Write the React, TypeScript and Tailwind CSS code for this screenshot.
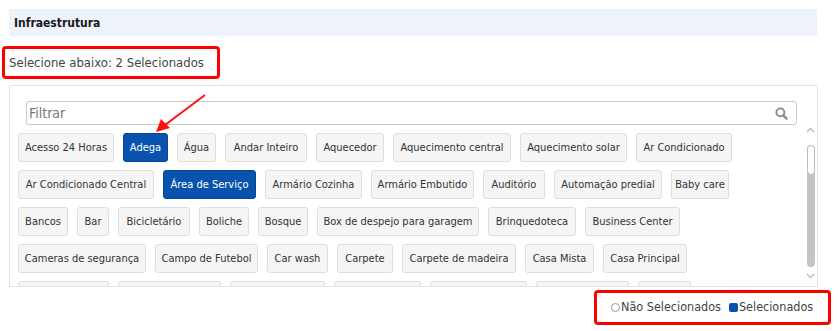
import React from "react";

type Chip = { label: string; w: string; sel?: boolean };

const rows: Chip[][] = [
  [
    { label: "Acesso 24 Horas", w: "w-[96px]" },
    { label: "Adega", w: "w-[45px]", sel: true },
    { label: "Água", w: "w-[39px]" },
    { label: "Andar Inteiro", w: "w-[82px]" },
    { label: "Aquecedor", w: "w-[68px]" },
    { label: "Aquecimento central", w: "w-[118px]" },
    { label: "Aquecimento solar", w: "w-[107px]" },
    { label: "Ar Condicionado", w: "w-[96px]" },
  ],
  [
    { label: "Ar Condicionado Central", w: "w-[136px]" },
    { label: "Área de Serviço", w: "w-[93px]", sel: true },
    { label: "Armário Cozinha", w: "w-[97px]" },
    { label: "Armário Embutido", w: "w-[103px]" },
    { label: "Auditório", w: "w-[62px]" },
    { label: "Automação predial", w: "w-[108px]" },
    { label: "Baby care", w: "w-[58px]" },
  ],
  [
    { label: "Bancos", w: "w-[50px]" },
    { label: "Bar", w: "w-[32px]" },
    { label: "Bicicletário", w: "w-[72px]" },
    { label: "Boliche", w: "w-[50px]" },
    { label: "Bosque", w: "w-[50px]" },
    { label: "Box de despejo para garagem", w: "w-[162px]" },
    { label: "Brinquedoteca", w: "w-[88px]" },
    { label: "Business Center", w: "w-[95px]" },
  ],
  [
    { label: "Cameras de segurança", w: "w-[128px]" },
    { label: "Campo de Futebol", w: "w-[103px]" },
    { label: "Car wash", w: "w-[61px]" },
    { label: "Carpete", w: "w-[56px]" },
    { label: "Carpete de madeira", w: "w-[114px]" },
    { label: "Casa Mista", w: "w-[69px]" },
    { label: "Casa Principal", w: "w-[84px]" },
  ],
  [
    { label: "Cerca elétrica", w: "w-[91px]" },
    { label: "Churrasqueira gás", w: "w-[103px]" },
    { label: "Churrasqueira", w: "w-[95px]" },
    { label: "Circuito TV", w: "w-[87px]" },
    { label: "Closet casal", w: "w-[97px]" },
    { label: "Copa cozinha", w: "w-[93px]" },
    { label: "Copa", w: "w-[53px]" },
  ],
];

const font = { fontFamily: '"DejaVu Sans Condensed", "DejaVu Sans", sans-serif' };

function ChipEl({ c }: { c: Chip }) {
  const base =
    "shrink-0 h-[29px] flex items-center justify-center whitespace-nowrap rounded-[3px] border text-[11px] leading-none ";
  return (
    <div
      className={
        base +
        c.w +
        (c.sel
          ? " border-[#0b4592] bg-[#0753ad] text-white"
          : " border-[#dedede] bg-[#f5f5f5] text-[#333]")
      }
    >
      {c.label}
    </div>
  );
}

export default function App() {
  return (
    <div className="relative w-[838px] h-[331px] bg-white overflow-hidden" style={font}>
      <div className="pt-[9px] pl-[9px]">
        <div className="w-[808px] h-[27px] bg-[#eef3fb] flex items-center pl-[5px] text-[12px] font-bold text-[#1a1a1a]">
          Infraestrutura
        </div>
      </div>

      <div className="mt-[10px] ml-[2px] w-[218px] h-[33px] border-[3px] border-[#ff0000] rounded-[4px] flex items-center pl-[4px] text-[13px] text-[#444]">
        Selecione abaixo: 2 Selecionados
      </div>

      <div className="mt-[6px] ml-[9px] w-[809px] h-[202px] border border-[#e4e4e4] flex flex-col overflow-hidden">
        <div className="pt-[15px] pl-[16px] pr-[20px]">
          <div className="h-[24px] border border-[#c8c8c8] rounded-[3px] flex items-center justify-between pl-[2px] pr-[8px]">
            <span className="text-[14px] text-[#777]">Filtrar</span>
            <svg width="13" height="13" viewBox="0 0 14 14">
              <circle cx="5.8" cy="5.8" r="4.3" fill="none" stroke="#888" strokeWidth="2" />
              <line x1="9" y1="9" x2="12.5" y2="12.5" stroke="#888" strokeWidth="2.4" strokeLinecap="round" />
            </svg>
          </div>
        </div>
        <div className="flex flex-1 min-h-0">
          <div className="flex-1 overflow-hidden pt-[8px] pl-[8px] flex flex-col gap-[8px]">
            {rows.map((r, i) => (
              <div key={i} className="flex gap-[9px]">
                {r.map((c) => (
                  <ChipEl key={c.label} c={c} />
                ))}
              </div>
            ))}
          </div>
          <div className="w-[13px] flex flex-col items-center pt-[2px]">
            <svg width="9" height="6" viewBox="0 0 9 6" className="mb-[12px]">
              <polyline points="1,5 4.5,1.5 8,5" fill="none" stroke="#bbb" strokeWidth="1.3" />
            </svg>
            <div className="w-[8px] h-[122px] rounded-[4px] bg-[#c4c4c4] flex flex-col">
              <div className="h-[30px] rounded-[4px] bg-white border border-[#bdbdbd]" />
            </div>
            <svg width="9" height="6" viewBox="0 0 9 6" className="mt-[6px]">
              <polyline points="1,1 4.5,4.5 8,1" fill="none" stroke="#bbb" strokeWidth="1.3" />
            </svg>
          </div>
        </div>
      </div>

      <div className="mt-[3px] flex justify-end pr-[7px]">
        <div className="h-[35px] w-[237px] border-[3px] border-[#ff0000] rounded-[4px] flex items-center pl-[14px] text-[12.5px] text-[#444]">
          <span className="w-[9px] h-[9px] rounded-full border border-[#999] bg-white mr-[1px] shrink-0" />
          <span>Não Selecionados</span>
          <span className="w-[9px] h-[9px] rounded-[2px] bg-[#0753ad] ml-[8px] mr-[1px] shrink-0" />
          <span>Selecionados</span>
        </div>
      </div>

      <svg className="absolute left-0 top-0 pointer-events-none" width="838" height="331">
        <line x1="205" y1="95" x2="165" y2="125" stroke="#ff1010" strokeWidth="2" />
        <polygon points="156,132 161,119 170,128" fill="#ff1010" />
      </svg>
    </div>
  );
}
